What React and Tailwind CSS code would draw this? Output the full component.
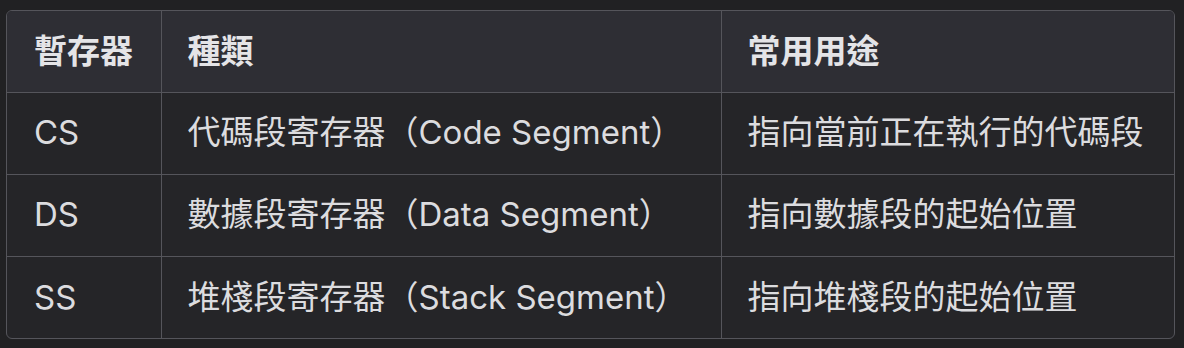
const ROWS = [
  { reg: 'CS', kind: '代碼段寄存器（Code Segment）', use: '指向當前正在執行的代碼段' },
  { reg: 'DS', kind: '數據段寄存器（Data Segment）', use: '指向數據段的起始位置' },
  { reg: 'SS', kind: '堆棧段寄存器（Stack Segment）', use: '指向堆棧段的起始位置' }
]

export default function App() {
  return (
    <div
      className="w-[1184px] h-[348px] bg-[#212123] pt-[10px] pl-[6px] text-[33px] text-[#dcdcdf]"
      style={{ fontFamily: 'Inter, "Noto Sans CJK TC", "Noto Sans", sans-serif' }}
    >
      <div className="w-[1169px] rounded-md border border-[#55555b] overflow-hidden bg-[#252528]">
        <table className="w-full table-fixed border-collapse">
          <colgroup>
            <col className="w-[154px]" />
            <col className="w-[560px]" />
            <col />
          </colgroup>
          <thead>
            <tr className="h-[81px] bg-[#2e2e34] text-[#e4e4e7]">
              <th className="pl-[27px] text-left font-bold">暫存器</th>
              <th className="pl-[26px] text-left font-bold border-l border-[#55555b]">種類</th>
              <th className="pl-[26px] text-left font-bold border-l border-[#55555b]">常用用途</th>
            </tr>
          </thead>
          <tbody>
            {ROWS.map(r => (
              <tr key={r.reg} className="h-[82px] border-t border-[#55555b]">
                <td className="pl-[27px]">{r.reg}</td>
                <td className="pl-[26px] border-l border-[#55555b] whitespace-nowrap">{r.kind}</td>
                <td className="pl-[26px] border-l border-[#55555b] whitespace-nowrap">{r.use}</td>
              </tr>
            ))}
          </tbody>
        </table>
      </div>
    </div>
  )
}
